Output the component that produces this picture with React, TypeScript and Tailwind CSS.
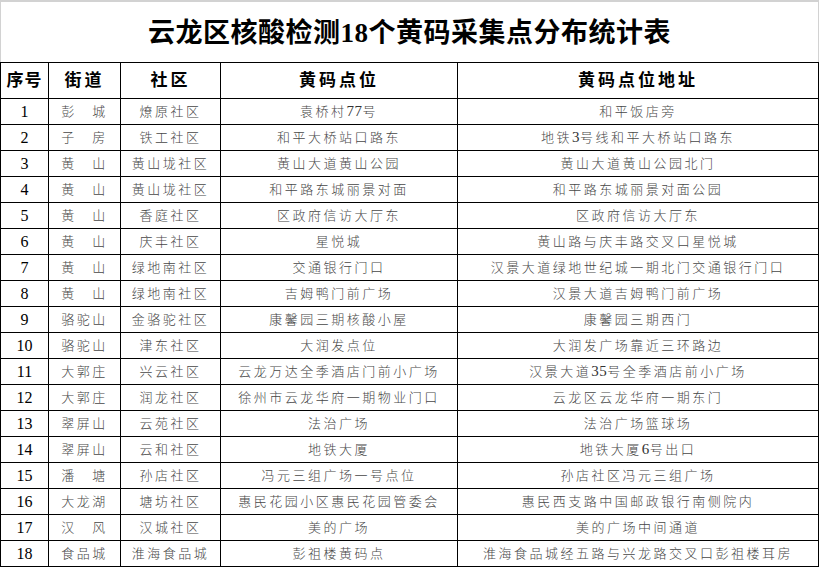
import React from "react";

const rows: [string, string, string, string, string][] = [
  ["1", "彭　城", "燎原社区", "袁桥村77号", "和平饭店旁"],
  ["2", "子　房", "铁工社区", "和平大桥站口路东", "地铁3号线和平大桥站口路东"],
  ["3", "黄　山", "黄山垅社区", "黄山大道黄山公园", "黄山大道黄山公园北门"],
  ["4", "黄　山", "黄山垅社区", "和平路东城丽景对面", "和平路东城丽景对面公园"],
  ["5", "黄　山", "香庭社区", "区政府信访大厅东", "区政府信访大厅东"],
  ["6", "黄　山", "庆丰社区", "星悦城", "黄山路与庆丰路交叉口星悦城"],
  ["7", "黄　山", "绿地南社区", "交通银行门口", "汉景大道绿地世纪城一期北门交通银行门口"],
  ["8", "黄　山", "绿地南社区", "吉姆鸭门前广场", "汉景大道吉姆鸭门前广场"],
  ["9", "骆驼山", "金骆驼社区", "康馨园三期核酸小屋", "康馨园三期西门"],
  ["10", "骆驼山", "津东社区", "大润发点位", "大润发广场靠近三环路边"],
  ["11", "大郭庄", "兴云社区", "云龙万达全季酒店门前小广场", "汉景大道35号全季酒店前小广场"],
  ["12", "大郭庄", "润龙社区", "徐州市云龙华府一期物业门口", "云龙区云龙华府一期东门"],
  ["13", "翠屏山", "云苑社区", "法治广场", "法治广场篮球场"],
  ["14", "翠屏山", "云和社区", "地铁大厦", "地铁大厦6号出口"],
  ["15", "潘　塘", "孙店社区", "冯元三组广场一号点位", "孙店社区冯元三组广场"],
  ["16", "大龙湖", "塘坊社区", "惠民花园小区惠民花园管委会", "惠民西支路中国邮政银行南侧院内"],
  ["17", "汉　风", "汉城社区", "美的广场", "美的广场中间通道"],
  ["18", "食品城", "淮海食品城", "彭祖楼黄码点", "淮海食品城经五路与兴龙路交叉口彭祖楼耳房"],
];

const font = { fontFamily: '"Liberation Serif", "Noto Sans CJK SC", serif' };

function CellText({ text }: { text: string }) {
  const parts = text.split(/(\d+)/).filter((p) => p.length > 0);
  return (
    <>
      {parts.map((p, i) =>
        /^\d+$/.test(p) ? (
          <span key={i} className="text-[15px] tracking-[0.5px] text-[#333]">
            {p}
          </span>
        ) : (
          <span key={i}>{p}</span>
        )
      )}
    </>
  );
}

export default function App() {
  return (
    <div className="w-[820px] h-[568px] bg-white overflow-hidden" style={font}>
      <div className="h-[62px] w-[819px] border-t-2 border-l border-r border-[#d2d2d2] flex items-center justify-center">
        <h1 className="text-[27px] font-bold text-black tracking-[0.5px] leading-none pt-[2px]">
          云龙区核酸检测18个黄码采集点分布统计表
        </h1>
      </div>
      <div className="w-[819px] border-l border-t border-black grid grid-cols-[48px_72px_100px_237px_361px]">
        {["序号", "街道", "社区", "黄码点位", "黄码点位地址"].map((h, i) => (
          <div
            key={h}
            className={`h-[36px] border-r border-b border-black flex items-center justify-center text-[17px] font-bold text-black ${
              i === 0 ? "tracking-[1px]" : "tracking-[3px]"
            }`}
          >
            {h}
          </div>
        ))}
        {rows.map((r) => (
          <React.Fragment key={r[0]}>
            <div className="h-[26px] border-r border-b border-black flex items-center justify-center text-[16px] text-black">
              {r[0]}
            </div>
            {r.slice(1).map((c, j) => (
              <div
                key={j}
                className="h-[26px] border-r border-b border-black flex items-center justify-center text-[13px] font-light text-[#474747] tracking-[2.5px] whitespace-nowrap"
              >
                <CellText text={c} />
              </div>
            ))}
          </React.Fragment>
        ))}
      </div>
    </div>
  );
}
